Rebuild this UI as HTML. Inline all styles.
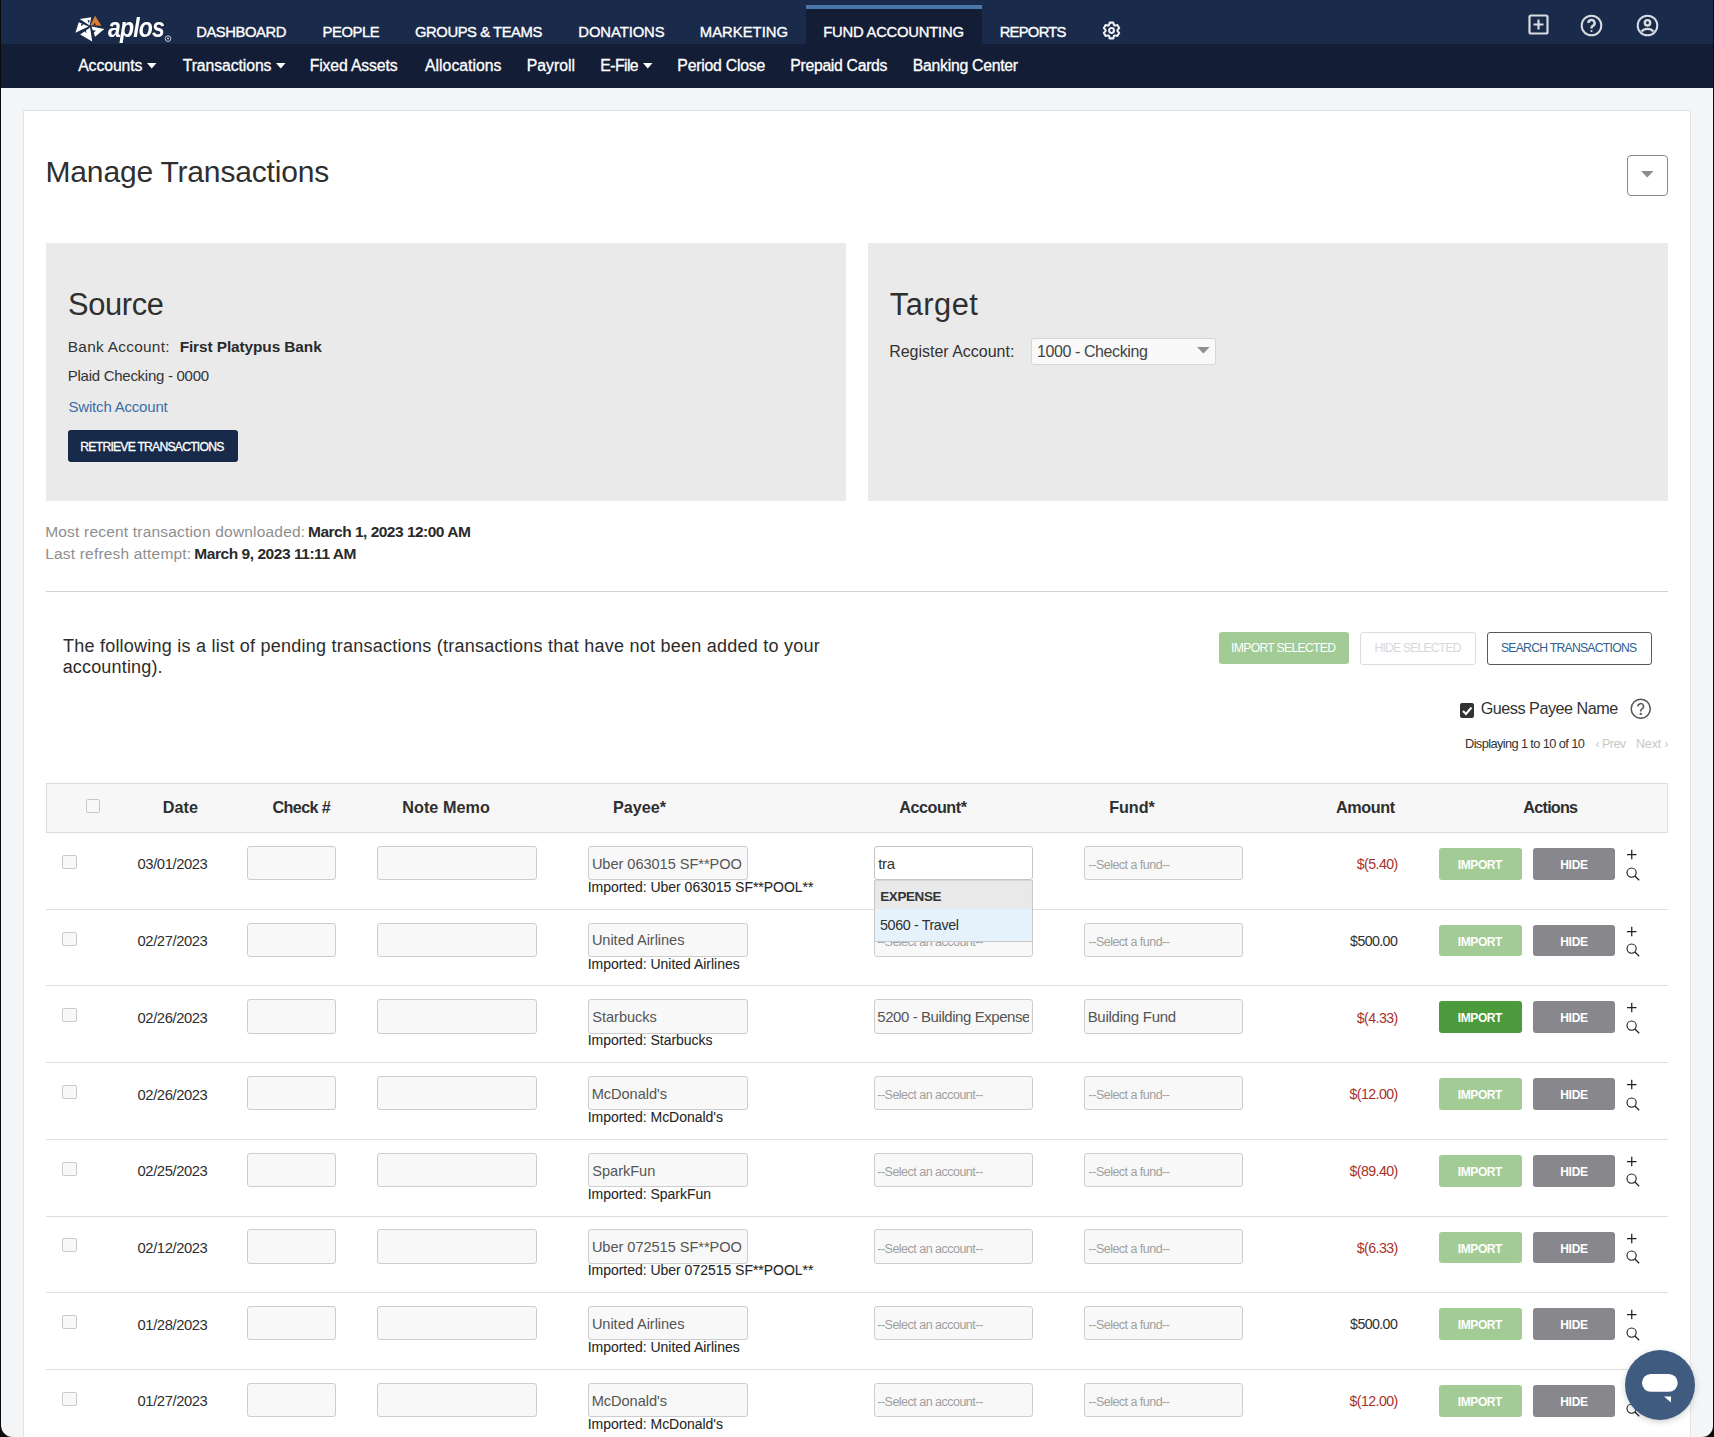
<!DOCTYPE html>
<html><head><meta charset="utf-8">
<style>
html,body{margin:0;padding:0;}
body{width:1714px;height:1437px;overflow:hidden;position:relative;background:#f4f5f7;font-family:"Liberation Sans",sans-serif;}
.t{position:absolute;white-space:pre;line-height:normal;font-family:"Liberation Sans",sans-serif;}
</style></head><body>
<div style="position:absolute;left:0px;top:0px;width:1714px;height:44px;background:#1a2a4a"></div>
<div style="position:absolute;left:0px;top:44px;width:1714px;height:43.5px;background:#131e36"></div>
<div style="position:absolute;left:806px;top:5px;width:176px;height:39px;background:#131e36"></div>
<div style="position:absolute;left:806px;top:5px;width:176px;height:4px;background:#4a77ab"></div>
<div style="position:absolute;left:23px;top:110px;width:1668px;height:1390px;background:#fff;border:1px solid #e3e4e6;box-sizing:border-box"></div>
<svg style="position:absolute;left:70px;top:12px" width="40" height="34" viewBox="0 0 40 34">
<polygon fill="#fff" points="9.7,7.1 21.3,5.2 19.6,13.4"/>
<polygon fill="#fff" points="8.8,10.2 18.6,14.6 5.4,20.8"/>
<polygon fill="#fff" points="10.2,22.6 20.1,15.4 22.2,29.6"/>
<polygon fill="#fff" points="21.5,14.6 34.3,17 25.1,24.8"/>
<polygon fill="#e07b2f" points="25.1,3.8 31.4,13.7 20.3,13.2"/>
<g fill="#1a2a4a">
<polygon points="17.6,8 19.8,8.4 18.6,11.2"/>
<polygon points="11.2,11.4 13.4,12.4 11.1,14.3"/>
<polygon points="13.3,17.6 15.9,18 16.4,21.6"/>
<polygon points="21.4,18.2 26,18.6 23.2,21.2"/>
<polygon points="24.6,10.4 26,13.3 23.4,13.2"/>
</g>
</svg>
<div class="t" style="left:108.2px;top:11.8px;font-size:28px;font-weight:700;font-style:italic;color:#fff;letter-spacing:-1px;transform:scaleX(0.823);transform-origin:0 0">aplos</div>
<svg style="position:absolute;left:164px;top:35px" width="8" height="8" viewBox="0 0 8 8"><circle cx="4" cy="3.6" r="2.8" fill="none" stroke="#c9ced8" stroke-width="1"/><circle cx="4" cy="3.6" r="1" fill="#c9ced8"/></svg>
<div class="t" style="left:196.14px;top:24.00px;font-size:14.8px;color:#fff;letter-spacing:-0.423px;-webkit-text-stroke:0.35px #fff;">DASHBOARD</div>
<div class="t" style="left:322.54px;top:24.00px;font-size:14.8px;color:#fff;letter-spacing:-0.430px;-webkit-text-stroke:0.35px #fff;">PEOPLE</div>
<div class="t" style="left:415.01px;top:24.00px;font-size:14.8px;color:#fff;letter-spacing:-0.431px;-webkit-text-stroke:0.35px #fff;">GROUPS &amp; TEAMS</div>
<div class="t" style="left:578.34px;top:24.00px;font-size:14.8px;color:#fff;letter-spacing:-0.076px;-webkit-text-stroke:0.35px #fff;">DONATIONS</div>
<div class="t" style="left:699.84px;top:24.00px;font-size:14.8px;color:#fff;letter-spacing:0.035px;-webkit-text-stroke:0.35px #fff;">MARKETING</div>
<div class="t" style="left:823.24px;top:24.00px;font-size:14.8px;color:#fff;letter-spacing:-0.224px;-webkit-text-stroke:0.35px #fff;">FUND ACCOUNTING</div>
<div class="t" style="left:999.64px;top:24.00px;font-size:14.8px;color:#fff;letter-spacing:-0.733px;-webkit-text-stroke:0.35px #fff;">REPORTS</div>
<svg style="position:absolute;left:1102px;top:21.2px" width="19" height="19" viewBox="0 0 24 24" fill="none" stroke="#eef0f4" stroke-width="2.6" stroke-linejoin="round">
<circle cx="12" cy="12" r="3.1"/>
<path d="M8.91,5.06 L9.71,2.06 L14.29,2.06 L15.09,5.06 L16.47,5.85 L19.46,5.04 L21.75,9.02 L19.56,11.21 L19.56,12.79 L21.75,14.98 L19.46,18.96 L16.47,18.15 L15.09,18.94 L14.29,21.94 L9.71,21.94 L8.91,18.94 L7.53,18.15 L4.54,18.96 L2.25,14.98 L4.44,12.79 L4.44,11.21 L2.25,9.02 L4.54,5.04 L7.53,5.85Z"/>
</svg>
<svg style="position:absolute;left:1528px;top:14px" width="21" height="21" viewBox="0 0 21 21" fill="none" stroke="#d8dbe0" stroke-width="2.2">
<rect x="1.5" y="1.5" width="18" height="18" rx="1.5"/><path d="M10.5 5.5v10M5.5 10.5h10"/></svg>
<svg style="position:absolute;left:1580px;top:13.5px" width="23" height="23" viewBox="0 0 23 23" fill="none" stroke="#d8dbe0" stroke-width="2">
<circle cx="11.5" cy="11.5" r="9.8"/><path d="M8.4 9a3.1 3.1 0 1 1 4.5 2.8c-.9.5-1.4 1-1.4 2.1v.5" stroke-width="2.5"/><circle cx="11.5" cy="17" r="1.1" fill="#d8dbe0" stroke="none"/></svg>
<svg style="position:absolute;left:1636px;top:13.5px" width="23" height="23" viewBox="0 0 23 23" fill="none" stroke="#d8dbe0" stroke-width="2">
<circle cx="11.5" cy="11.5" r="9.8"/><circle cx="11.5" cy="8.8" r="2.7" stroke-width="2.4"/><path d="M5.6 17.4c1.4-1.7 3.4-2.5 5.9-2.5s4.5.8 5.9 2.5" stroke-width="2.4"/></svg>
<div class="t" style="left:78.20px;top:57.00px;font-size:15.8px;color:#fff;letter-spacing:-0.099px;-webkit-text-stroke:0.3px #fff;">Accounts</div>
<div class="t" style="left:182.75px;top:57.00px;font-size:15.8px;color:#fff;letter-spacing:-0.102px;-webkit-text-stroke:0.3px #fff;">Transactions</div>
<div class="t" style="left:309.77px;top:57.00px;font-size:15.8px;color:#fff;letter-spacing:-0.156px;-webkit-text-stroke:0.3px #fff;">Fixed Assets</div>
<div class="t" style="left:425.00px;top:57.00px;font-size:15.8px;color:#fff;letter-spacing:0.009px;-webkit-text-stroke:0.3px #fff;">Allocations</div>
<div class="t" style="left:526.77px;top:57.00px;font-size:15.8px;color:#fff;-webkit-text-stroke:0.3px #fff;">Payroll</div>
<div class="t" style="left:600.27px;top:57.00px;font-size:15.8px;color:#fff;letter-spacing:-0.577px;-webkit-text-stroke:0.3px #fff;">E-File</div>
<div class="t" style="left:677.37px;top:57.00px;font-size:15.8px;color:#fff;letter-spacing:-0.235px;-webkit-text-stroke:0.3px #fff;">Period Close</div>
<div class="t" style="left:790.27px;top:57.00px;font-size:15.8px;color:#fff;letter-spacing:-0.314px;-webkit-text-stroke:0.3px #fff;">Prepaid Cards</div>
<div class="t" style="left:912.77px;top:57.00px;font-size:15.8px;color:#fff;letter-spacing:-0.277px;-webkit-text-stroke:0.3px #fff;">Banking Center</div>
<svg style="position:absolute;left:147.4px;top:63px" width="10" height="6" viewBox="0 0 10 6"><polygon points="0,0 9.5,0 4.75,5.5" fill="#fff"/></svg>
<svg style="position:absolute;left:276px;top:63px" width="10" height="6" viewBox="0 0 10 6"><polygon points="0,0 9.5,0 4.75,5.5" fill="#fff"/></svg>
<svg style="position:absolute;left:642.6px;top:63px" width="10" height="6" viewBox="0 0 10 6"><polygon points="0,0 9.5,0 4.75,5.5" fill="#fff"/></svg>
<div class="t" style="left:45.56px;top:155.00px;font-size:30px;color:#2f2f2f;letter-spacing:-0.177px;">Manage Transactions</div>
<div style="position:absolute;left:1627px;top:155px;width:40.5px;height:40.5px;border:1px solid #8a8a8a;border-radius:4px;box-sizing:border-box;background:#fff"></div>
<svg style="position:absolute;left:1640.5px;top:171px" width="13" height="8" viewBox="0 0 13 8"><polygon points="0,0 12.5,0 6.25,6.5" fill="#8c8c8c"/></svg>
<div style="position:absolute;left:46px;top:242.5px;width:800px;height:258.2px;background:#eaeaea"></div>
<div style="position:absolute;left:868px;top:242.5px;width:800px;height:258.2px;background:#eaeaea"></div>
<div class="t" style="left:68.04px;top:287.10px;font-size:30.8px;color:#2f2f2f;letter-spacing:-0.356px;">Source</div>
<div class="t" style="left:67.80px;top:337.90px;font-size:15.4px;color:#333;letter-spacing:0.274px;">Bank Account:</div>
<div class="t" style="left:179.64px;top:337.90px;font-size:15.4px;color:#2a2a2a;font-weight:700;letter-spacing:-0.089px;">First Platypus Bank</div>
<div class="t" style="left:67.83px;top:367.00px;font-size:15px;color:#333;letter-spacing:-0.275px;">Plaid Checking - 0000</div>
<div class="t" style="left:68.53px;top:398.00px;font-size:15px;color:#3a6ea5;letter-spacing:-0.195px;">Switch Account</div>
<div style="position:absolute;left:68px;top:430px;width:170px;height:31.7px;background:#172a4a;border-radius:3px"></div>
<div class="t" style="left:80.35px;top:439.70px;font-size:12.2px;color:#fff;letter-spacing:-0.781px;-webkit-text-stroke:0.3px #fff;">RETRIEVE TRANSACTIONS</div>
<div class="t" style="left:889.72px;top:287.30px;font-size:30.8px;color:#2f2f2f;letter-spacing:0.515px;">Target</div>
<div class="t" style="left:889.15px;top:343.20px;font-size:16px;color:#333;letter-spacing:-0.012px;">Register Account:</div>
<div style="position:absolute;left:1030.5px;top:337.8px;width:185.8px;height:27.4px;background:#f9f9f9;border:1px solid #d6d6d6;border-radius:3px;box-sizing:border-box"></div>
<div class="t" style="left:1036.90px;top:343.20px;font-size:16px;color:#444;letter-spacing:-0.401px;">1000 - Checking</div>
<svg style="position:absolute;left:1196.5px;top:347.4px" width="13" height="7" viewBox="0 0 13 7"><polygon points="0,0 12.7,0 6.35,6.6" fill="#8f8f8f"/></svg>
<div class="t" style="left:45.19px;top:522.80px;font-size:15.5px;color:#8e8e8e;letter-spacing:0.194px;">Most recent transaction downloaded:</div>
<div class="t" style="left:308.03px;top:522.80px;font-size:15.5px;color:#2a2a2a;font-weight:700;letter-spacing:-0.508px;">March 1, 2023 12:00 AM</div>
<div class="t" style="left:45.19px;top:545.40px;font-size:15.5px;color:#8e8e8e;letter-spacing:0.188px;">Last refresh attempt:</div>
<div class="t" style="left:194.33px;top:545.40px;font-size:15.5px;color:#2a2a2a;font-weight:700;letter-spacing:-0.455px;">March 9, 2023 11:11 AM</div>
<div style="position:absolute;left:46px;top:591px;width:1622px;height:1px;background:#d2d2d2"></div>
<div class="t" style="left:62.92px;top:635.60px;font-size:18px;color:#2c2c2c;letter-spacing:0.241px;">The following is a list of pending transactions (transactions that have not been added to your</div>
<div class="t" style="left:62.64px;top:657.00px;font-size:18px;color:#2c2c2c;letter-spacing:0.175px;">accounting).</div>
<div style="position:absolute;left:1219px;top:632.3px;width:129.8px;height:31.5px;background:#a3cb96;border-radius:3px"></div>
<div class="t" style="left:1231.05px;top:641.10px;font-size:12.2px;color:#fff;letter-spacing:-0.689px;">IMPORT SELECTED</div>
<div style="position:absolute;left:1360px;top:631.5px;width:115.7px;height:33.1px;background:#fff;border:1px solid #dcdcdc;border-radius:3px;box-sizing:border-box"></div>
<div class="t" style="left:1374.45px;top:641.10px;font-size:12.2px;color:#d8d8d8;letter-spacing:-0.814px;">HIDE SELECTED</div>
<div style="position:absolute;left:1487.3px;top:631.5px;width:164.3px;height:33.1px;background:#fff;border:1px solid #5a5a5a;border-radius:3px;box-sizing:border-box"></div>
<div class="t" style="left:1500.92px;top:641.10px;font-size:12.2px;color:#2f5f92;letter-spacing:-0.734px;">SEARCH TRANSACTIONS</div>
<div style="position:absolute;left:1459.6px;top:703px;width:14.4px;height:15.3px;background:#333;border-radius:2px"></div>
<svg style="position:absolute;left:1459.6px;top:703px" width="14.4" height="15.3" viewBox="0 0 14.4 15.3"><path d="M3 8l3 3 5.5-6.5" fill="none" stroke="#fff" stroke-width="2"/></svg>
<div class="t" style="left:1480.74px;top:699.20px;font-size:16.2px;color:#333;letter-spacing:-0.490px;">Guess Payee Name</div>
<svg style="position:absolute;left:1629.5px;top:697.8px" width="21.5" height="21.5" viewBox="0 0 23 23" fill="none" stroke="#555" stroke-width="1.6">
<circle cx="11.5" cy="11.5" r="10.2"/><path d="M8.5 9a3 3 0 1 1 4.3 2.7c-.9.5-1.3 1-1.3 2v.8"/><circle cx="11.5" cy="17" r="0.5" fill="#555"/></svg>
<div class="t" style="left:1465.00px;top:735.50px;font-size:12.8px;color:#333;letter-spacing:-0.607px;">Displaying 1 to 10 of 10</div>
<div class="t" style="left:1595.61px;top:736.50px;font-size:12.5px;color:#c8c8c8;letter-spacing:-0.589px;">‹ Prev</div>
<div class="t" style="left:1636.02px;top:736.50px;font-size:12.5px;color:#c8c8c8;letter-spacing:-0.182px;">Next ›</div>
<div style="position:absolute;left:46px;top:782.5px;width:1622px;height:50.3px;background:#f7f7f7;border:1px solid #dcdcdc;box-sizing:border-box"></div>
<div style="position:absolute;left:86.2px;top:799.4px;width:13.6px;height:13.6px;background:#f8f8f8;border:1px solid #c8c8c8;border-radius:2px;box-sizing:border-box"></div>
<div class="t" style="left:162.79px;top:798.30px;font-size:16.2px;color:#2f2f2f;font-weight:700;letter-spacing:0.068px;">Date</div>
<div class="t" style="left:272.49px;top:798.30px;font-size:16.2px;color:#2f2f2f;font-weight:700;letter-spacing:-0.630px;">Check #</div>
<div class="t" style="left:402.19px;top:798.30px;font-size:16.2px;color:#2f2f2f;font-weight:700;letter-spacing:0.067px;">Note Memo</div>
<div class="t" style="left:612.99px;top:798.30px;font-size:16.2px;color:#2f2f2f;font-weight:700;letter-spacing:-0.032px;">Payee*</div>
<div class="t" style="left:899.15px;top:798.30px;font-size:16.2px;color:#2f2f2f;font-weight:700;letter-spacing:-0.454px;">Account*</div>
<div class="t" style="left:1109.19px;top:798.30px;font-size:16.2px;color:#2f2f2f;font-weight:700;letter-spacing:-0.075px;">Fund*</div>
<div class="t" style="left:1336.05px;top:798.30px;font-size:16.2px;color:#2f2f2f;font-weight:700;letter-spacing:-0.391px;">Amount</div>
<div class="t" style="left:1523.35px;top:798.30px;font-size:16.2px;color:#2f2f2f;font-weight:700;letter-spacing:-0.766px;">Actions</div>
<div style="position:absolute;left:62.4px;top:854.8px;width:14.4px;height:14.2px;background:#f8f8f8;border:1px solid #cacaca;border-radius:2px;box-sizing:border-box"></div>
<div class="t" style="left:137.54px;top:856.40px;font-size:14.8px;color:#2f2f2f;letter-spacing:-0.423px;">03/01/2023</div>
<div style="position:absolute;left:247.2px;top:845.9px;width:88.4px;height:34.4px;background:#f8f8f8;border:1px solid #cdcdcd;border-radius:3px;box-sizing:border-box"></div>
<div style="position:absolute;left:377.4px;top:845.9px;width:159.2px;height:34.4px;background:#f8f8f8;border:1px solid #cdcdcd;border-radius:3px;box-sizing:border-box"></div>
<div style="position:absolute;left:588.3px;top:845.9px;width:159.3px;height:34.4px;background:#f8f8f8;border:1px solid #cdcdcd;border-radius:3px;box-sizing:border-box"></div>
<div class="t" style="left:591.89px;top:855.70px;font-size:14.6px;color:#555;letter-spacing:-0.050px;">Uber 063015 SF**POO</div>
<div class="t" style="left:587.66px;top:878.80px;font-size:14px;color:#262626;letter-spacing:-0.020px;-webkit-text-stroke:0.08px #2a2a2a;">Imported: Uber 063015 SF**POOL**</div>
<div style="position:absolute;left:874.1px;top:845.9px;width:158.6px;height:34.4px;background:#fff;border:1px solid #c4c4c4;border-radius:3px;box-sizing:border-box"></div>
<div class="t" style="left:878.20px;top:855.10px;font-size:15px;color:#333;letter-spacing:-0.250px;">tra</div>
<div style="position:absolute;left:1084.3px;top:845.9px;width:159.1px;height:34.4px;background:#f8f8f8;border:1px solid #cdcdcd;border-radius:3px;box-sizing:border-box"></div>
<div class="t" style="left:1088.61px;top:858.10px;font-size:12.5px;color:#a0a0a0;letter-spacing:-0.523px;">--Select a fund--</div>
<div class="t" style="left:1356.84px;top:856.20px;font-size:14.2px;color:#a8322a;letter-spacing:-0.600px;">$(5.40)</div>
<div style="position:absolute;left:1439px;top:848.0px;width:83px;height:31.8px;background:#a2cb96;border-radius:3px"></div>
<div class="t" style="left:1457.85px;top:858.00px;font-size:12px;color:#fff;font-weight:700;letter-spacing:-0.419px;">IMPORT</div>
<div style="position:absolute;left:1533.2px;top:848.0px;width:81.6px;height:31.8px;background:#88888c;border-radius:3px"></div>
<div class="t" style="left:1560.15px;top:858.00px;font-size:12px;color:#fff;font-weight:700;letter-spacing:-0.235px;">HIDE</div>
<svg style="position:absolute;left:1625.5px;top:849.0px" width="12" height="12" viewBox="0 0 12 12"><path d="M5.75 0.8v9.4M1 5.5h9.5" stroke="#222" stroke-width="1.25" fill="none"/></svg>
<svg style="position:absolute;left:1625.5px;top:866.5px" width="15" height="14" viewBox="0 0 15 14"><circle cx="5.6" cy="5.6" r="4.6" stroke="#222" stroke-width="1.15" fill="none"/><path d="M8.9 9l4.3 4.2" stroke="#222" stroke-width="1.3"/></svg>
<div style="position:absolute;left:46px;top:908.7px;width:1622px;height:1.0px;background:#dedede"></div>
<div style="position:absolute;left:62.4px;top:931.5px;width:14.4px;height:14.2px;background:#f8f8f8;border:1px solid #cacaca;border-radius:2px;box-sizing:border-box"></div>
<div class="t" style="left:137.54px;top:933.10px;font-size:14.8px;color:#2f2f2f;letter-spacing:-0.423px;">02/27/2023</div>
<div style="position:absolute;left:247.2px;top:922.6px;width:88.4px;height:34.4px;background:#f8f8f8;border:1px solid #cdcdcd;border-radius:3px;box-sizing:border-box"></div>
<div style="position:absolute;left:377.4px;top:922.6px;width:159.2px;height:34.4px;background:#f8f8f8;border:1px solid #cdcdcd;border-radius:3px;box-sizing:border-box"></div>
<div style="position:absolute;left:588.3px;top:922.6px;width:159.3px;height:34.4px;background:#f8f8f8;border:1px solid #cdcdcd;border-radius:3px;box-sizing:border-box"></div>
<div class="t" style="left:591.89px;top:932.40px;font-size:14.6px;color:#555;letter-spacing:-0.050px;">United Airlines</div>
<div class="t" style="left:587.66px;top:955.50px;font-size:14px;color:#262626;letter-spacing:-0.020px;-webkit-text-stroke:0.08px #2a2a2a;">Imported: United Airlines</div>
<div style="position:absolute;left:874.1px;top:922.6px;width:158.6px;height:34.4px;background:#f8f8f8;border:1px solid #cdcdcd;border-radius:3px;box-sizing:border-box"></div>
<div class="t" style="left:877.31px;top:934.90px;font-size:12.5px;color:#a0a0a0;letter-spacing:-0.514px;">--Select an account--</div>
<div style="position:absolute;left:1084.3px;top:922.6px;width:159.1px;height:34.4px;background:#f8f8f8;border:1px solid #cdcdcd;border-radius:3px;box-sizing:border-box"></div>
<div class="t" style="left:1088.61px;top:934.80px;font-size:12.5px;color:#a0a0a0;letter-spacing:-0.523px;">--Select a fund--</div>
<div class="t" style="left:1350.12px;top:932.90px;font-size:14.2px;color:#2f2f2f;letter-spacing:-0.600px;">$500.00</div>
<div style="position:absolute;left:1439px;top:924.7px;width:83px;height:31.8px;background:#a2cb96;border-radius:3px"></div>
<div class="t" style="left:1457.85px;top:934.70px;font-size:12px;color:#fff;font-weight:700;letter-spacing:-0.419px;">IMPORT</div>
<div style="position:absolute;left:1533.2px;top:924.7px;width:81.6px;height:31.8px;background:#88888c;border-radius:3px"></div>
<div class="t" style="left:1560.15px;top:934.70px;font-size:12px;color:#fff;font-weight:700;letter-spacing:-0.235px;">HIDE</div>
<svg style="position:absolute;left:1625.5px;top:925.7px" width="12" height="12" viewBox="0 0 12 12"><path d="M5.75 0.8v9.4M1 5.5h9.5" stroke="#222" stroke-width="1.25" fill="none"/></svg>
<svg style="position:absolute;left:1625.5px;top:943.2px" width="15" height="14" viewBox="0 0 15 14"><circle cx="5.6" cy="5.6" r="4.6" stroke="#222" stroke-width="1.15" fill="none"/><path d="M8.9 9l4.3 4.2" stroke="#222" stroke-width="1.3"/></svg>
<div style="position:absolute;left:46px;top:985.4px;width:1622px;height:1.0px;background:#dedede"></div>
<div style="position:absolute;left:62.4px;top:1008.1999999999999px;width:14.4px;height:14.2px;background:#f8f8f8;border:1px solid #cacaca;border-radius:2px;box-sizing:border-box"></div>
<div class="t" style="left:137.54px;top:1009.80px;font-size:14.8px;color:#2f2f2f;letter-spacing:-0.423px;">02/26/2023</div>
<div style="position:absolute;left:247.2px;top:999.3px;width:88.4px;height:34.4px;background:#f8f8f8;border:1px solid #cdcdcd;border-radius:3px;box-sizing:border-box"></div>
<div style="position:absolute;left:377.4px;top:999.3px;width:159.2px;height:34.4px;background:#f8f8f8;border:1px solid #cdcdcd;border-radius:3px;box-sizing:border-box"></div>
<div style="position:absolute;left:588.3px;top:999.3px;width:159.3px;height:34.4px;background:#f8f8f8;border:1px solid #cdcdcd;border-radius:3px;box-sizing:border-box"></div>
<div class="t" style="left:592.34px;top:1009.10px;font-size:14.6px;color:#555;letter-spacing:-0.050px;">Starbucks</div>
<div class="t" style="left:587.66px;top:1032.20px;font-size:14px;color:#262626;letter-spacing:-0.020px;-webkit-text-stroke:0.08px #2a2a2a;">Imported: Starbucks</div>
<div style="position:absolute;left:874.1px;top:999.3px;width:158.6px;height:34.4px;background:#f8f8f8;border:1px solid #cdcdcd;border-radius:3px;box-sizing:border-box"></div>
<div style="position:absolute;left:875px;top:1000.3px;width:153.5px;height:32px;overflow:hidden"><div class="t" style="left:2.3px;top:8.2px;font-size:15px;color:#555;letter-spacing:-0.43px">5200 - Building Expense</div></div>
<div style="position:absolute;left:1084.3px;top:999.3px;width:159.1px;height:34.4px;background:#f8f8f8;border:1px solid #cdcdcd;border-radius:3px;box-sizing:border-box"></div>
<div class="t" style="left:1087.63px;top:1008.40px;font-size:15px;color:#555;letter-spacing:-0.268px;">Building Fund</div>
<div class="t" style="left:1356.84px;top:1009.60px;font-size:14.2px;color:#a8322a;letter-spacing:-0.600px;">$(4.33)</div>
<div style="position:absolute;left:1439px;top:1001.4px;width:83px;height:31.8px;background:#4b9a3b;border-radius:3px"></div>
<div class="t" style="left:1457.85px;top:1011.40px;font-size:12px;color:#fff;font-weight:700;letter-spacing:-0.419px;">IMPORT</div>
<div style="position:absolute;left:1533.2px;top:1001.4px;width:81.6px;height:31.8px;background:#88888c;border-radius:3px"></div>
<div class="t" style="left:1560.15px;top:1011.40px;font-size:12px;color:#fff;font-weight:700;letter-spacing:-0.235px;">HIDE</div>
<svg style="position:absolute;left:1625.5px;top:1002.4px" width="12" height="12" viewBox="0 0 12 12"><path d="M5.75 0.8v9.4M1 5.5h9.5" stroke="#222" stroke-width="1.25" fill="none"/></svg>
<svg style="position:absolute;left:1625.5px;top:1019.9px" width="15" height="14" viewBox="0 0 15 14"><circle cx="5.6" cy="5.6" r="4.6" stroke="#222" stroke-width="1.15" fill="none"/><path d="M8.9 9l4.3 4.2" stroke="#222" stroke-width="1.3"/></svg>
<div style="position:absolute;left:46px;top:1062.1px;width:1622px;height:1.0px;background:#dedede"></div>
<div style="position:absolute;left:62.4px;top:1084.8999999999999px;width:14.4px;height:14.2px;background:#f8f8f8;border:1px solid #cacaca;border-radius:2px;box-sizing:border-box"></div>
<div class="t" style="left:137.54px;top:1086.50px;font-size:14.8px;color:#2f2f2f;letter-spacing:-0.423px;">02/26/2023</div>
<div style="position:absolute;left:247.2px;top:1076.0px;width:88.4px;height:34.4px;background:#f8f8f8;border:1px solid #cdcdcd;border-radius:3px;box-sizing:border-box"></div>
<div style="position:absolute;left:377.4px;top:1076.0px;width:159.2px;height:34.4px;background:#f8f8f8;border:1px solid #cdcdcd;border-radius:3px;box-sizing:border-box"></div>
<div style="position:absolute;left:588.3px;top:1076.0px;width:159.3px;height:34.4px;background:#f8f8f8;border:1px solid #cdcdcd;border-radius:3px;box-sizing:border-box"></div>
<div class="t" style="left:591.66px;top:1085.80px;font-size:14.6px;color:#555;letter-spacing:-0.050px;">McDonald&#x27;s</div>
<div class="t" style="left:587.66px;top:1108.90px;font-size:14px;color:#262626;letter-spacing:-0.020px;-webkit-text-stroke:0.08px #2a2a2a;">Imported: McDonald&#x27;s</div>
<div style="position:absolute;left:874.1px;top:1076.0px;width:158.6px;height:34.4px;background:#f8f8f8;border:1px solid #cdcdcd;border-radius:3px;box-sizing:border-box"></div>
<div class="t" style="left:877.31px;top:1088.30px;font-size:12.5px;color:#a0a0a0;letter-spacing:-0.514px;">--Select an account--</div>
<div style="position:absolute;left:1084.3px;top:1076.0px;width:159.1px;height:34.4px;background:#f8f8f8;border:1px solid #cdcdcd;border-radius:3px;box-sizing:border-box"></div>
<div class="t" style="left:1088.61px;top:1088.20px;font-size:12.5px;color:#a0a0a0;letter-spacing:-0.523px;">--Select a fund--</div>
<div class="t" style="left:1349.55px;top:1086.30px;font-size:14.2px;color:#a8322a;letter-spacing:-0.600px;">$(12.00)</div>
<div style="position:absolute;left:1439px;top:1078.1px;width:83px;height:31.8px;background:#a2cb96;border-radius:3px"></div>
<div class="t" style="left:1457.85px;top:1088.10px;font-size:12px;color:#fff;font-weight:700;letter-spacing:-0.419px;">IMPORT</div>
<div style="position:absolute;left:1533.2px;top:1078.1px;width:81.6px;height:31.8px;background:#88888c;border-radius:3px"></div>
<div class="t" style="left:1560.15px;top:1088.10px;font-size:12px;color:#fff;font-weight:700;letter-spacing:-0.235px;">HIDE</div>
<svg style="position:absolute;left:1625.5px;top:1079.1px" width="12" height="12" viewBox="0 0 12 12"><path d="M5.75 0.8v9.4M1 5.5h9.5" stroke="#222" stroke-width="1.25" fill="none"/></svg>
<svg style="position:absolute;left:1625.5px;top:1096.6px" width="15" height="14" viewBox="0 0 15 14"><circle cx="5.6" cy="5.6" r="4.6" stroke="#222" stroke-width="1.15" fill="none"/><path d="M8.9 9l4.3 4.2" stroke="#222" stroke-width="1.3"/></svg>
<div style="position:absolute;left:46px;top:1138.8px;width:1622px;height:1.0px;background:#dedede"></div>
<div style="position:absolute;left:62.4px;top:1161.6px;width:14.4px;height:14.2px;background:#f8f8f8;border:1px solid #cacaca;border-radius:2px;box-sizing:border-box"></div>
<div class="t" style="left:137.54px;top:1163.20px;font-size:14.8px;color:#2f2f2f;letter-spacing:-0.423px;">02/25/2023</div>
<div style="position:absolute;left:247.2px;top:1152.7px;width:88.4px;height:34.4px;background:#f8f8f8;border:1px solid #cdcdcd;border-radius:3px;box-sizing:border-box"></div>
<div style="position:absolute;left:377.4px;top:1152.7px;width:159.2px;height:34.4px;background:#f8f8f8;border:1px solid #cdcdcd;border-radius:3px;box-sizing:border-box"></div>
<div style="position:absolute;left:588.3px;top:1152.7px;width:159.3px;height:34.4px;background:#f8f8f8;border:1px solid #cdcdcd;border-radius:3px;box-sizing:border-box"></div>
<div class="t" style="left:592.34px;top:1162.50px;font-size:14.6px;color:#555;letter-spacing:-0.050px;">SparkFun</div>
<div class="t" style="left:587.66px;top:1185.60px;font-size:14px;color:#262626;letter-spacing:-0.020px;-webkit-text-stroke:0.08px #2a2a2a;">Imported: SparkFun</div>
<div style="position:absolute;left:874.1px;top:1152.7px;width:158.6px;height:34.4px;background:#f8f8f8;border:1px solid #cdcdcd;border-radius:3px;box-sizing:border-box"></div>
<div class="t" style="left:877.31px;top:1165.00px;font-size:12.5px;color:#a0a0a0;letter-spacing:-0.514px;">--Select an account--</div>
<div style="position:absolute;left:1084.3px;top:1152.7px;width:159.1px;height:34.4px;background:#f8f8f8;border:1px solid #cdcdcd;border-radius:3px;box-sizing:border-box"></div>
<div class="t" style="left:1088.61px;top:1164.90px;font-size:12.5px;color:#a0a0a0;letter-spacing:-0.523px;">--Select a fund--</div>
<div class="t" style="left:1349.55px;top:1163.00px;font-size:14.2px;color:#a8322a;letter-spacing:-0.600px;">$(89.40)</div>
<div style="position:absolute;left:1439px;top:1154.8px;width:83px;height:31.8px;background:#a2cb96;border-radius:3px"></div>
<div class="t" style="left:1457.85px;top:1164.80px;font-size:12px;color:#fff;font-weight:700;letter-spacing:-0.419px;">IMPORT</div>
<div style="position:absolute;left:1533.2px;top:1154.8px;width:81.6px;height:31.8px;background:#88888c;border-radius:3px"></div>
<div class="t" style="left:1560.15px;top:1164.80px;font-size:12px;color:#fff;font-weight:700;letter-spacing:-0.235px;">HIDE</div>
<svg style="position:absolute;left:1625.5px;top:1155.8px" width="12" height="12" viewBox="0 0 12 12"><path d="M5.75 0.8v9.4M1 5.5h9.5" stroke="#222" stroke-width="1.25" fill="none"/></svg>
<svg style="position:absolute;left:1625.5px;top:1173.3px" width="15" height="14" viewBox="0 0 15 14"><circle cx="5.6" cy="5.6" r="4.6" stroke="#222" stroke-width="1.15" fill="none"/><path d="M8.9 9l4.3 4.2" stroke="#222" stroke-width="1.3"/></svg>
<div style="position:absolute;left:46px;top:1215.5px;width:1622px;height:1.0px;background:#dedede"></div>
<div style="position:absolute;left:62.4px;top:1238.3px;width:14.4px;height:14.2px;background:#f8f8f8;border:1px solid #cacaca;border-radius:2px;box-sizing:border-box"></div>
<div class="t" style="left:137.54px;top:1239.90px;font-size:14.8px;color:#2f2f2f;letter-spacing:-0.423px;">02/12/2023</div>
<div style="position:absolute;left:247.2px;top:1229.4px;width:88.4px;height:34.4px;background:#f8f8f8;border:1px solid #cdcdcd;border-radius:3px;box-sizing:border-box"></div>
<div style="position:absolute;left:377.4px;top:1229.4px;width:159.2px;height:34.4px;background:#f8f8f8;border:1px solid #cdcdcd;border-radius:3px;box-sizing:border-box"></div>
<div style="position:absolute;left:588.3px;top:1229.4px;width:159.3px;height:34.4px;background:#f8f8f8;border:1px solid #cdcdcd;border-radius:3px;box-sizing:border-box"></div>
<div class="t" style="left:591.89px;top:1239.20px;font-size:14.6px;color:#555;letter-spacing:-0.050px;">Uber 072515 SF**POO</div>
<div class="t" style="left:587.66px;top:1262.30px;font-size:14px;color:#262626;letter-spacing:-0.020px;-webkit-text-stroke:0.08px #2a2a2a;">Imported: Uber 072515 SF**POOL**</div>
<div style="position:absolute;left:874.1px;top:1229.4px;width:158.6px;height:34.4px;background:#f8f8f8;border:1px solid #cdcdcd;border-radius:3px;box-sizing:border-box"></div>
<div class="t" style="left:877.31px;top:1241.70px;font-size:12.5px;color:#a0a0a0;letter-spacing:-0.514px;">--Select an account--</div>
<div style="position:absolute;left:1084.3px;top:1229.4px;width:159.1px;height:34.4px;background:#f8f8f8;border:1px solid #cdcdcd;border-radius:3px;box-sizing:border-box"></div>
<div class="t" style="left:1088.61px;top:1241.60px;font-size:12.5px;color:#a0a0a0;letter-spacing:-0.523px;">--Select a fund--</div>
<div class="t" style="left:1356.84px;top:1239.70px;font-size:14.2px;color:#a8322a;letter-spacing:-0.600px;">$(6.33)</div>
<div style="position:absolute;left:1439px;top:1231.5px;width:83px;height:31.8px;background:#a2cb96;border-radius:3px"></div>
<div class="t" style="left:1457.85px;top:1241.50px;font-size:12px;color:#fff;font-weight:700;letter-spacing:-0.419px;">IMPORT</div>
<div style="position:absolute;left:1533.2px;top:1231.5px;width:81.6px;height:31.8px;background:#88888c;border-radius:3px"></div>
<div class="t" style="left:1560.15px;top:1241.50px;font-size:12px;color:#fff;font-weight:700;letter-spacing:-0.235px;">HIDE</div>
<svg style="position:absolute;left:1625.5px;top:1232.5px" width="12" height="12" viewBox="0 0 12 12"><path d="M5.75 0.8v9.4M1 5.5h9.5" stroke="#222" stroke-width="1.25" fill="none"/></svg>
<svg style="position:absolute;left:1625.5px;top:1250.0px" width="15" height="14" viewBox="0 0 15 14"><circle cx="5.6" cy="5.6" r="4.6" stroke="#222" stroke-width="1.15" fill="none"/><path d="M8.9 9l4.3 4.2" stroke="#222" stroke-width="1.3"/></svg>
<div style="position:absolute;left:46px;top:1292.2px;width:1622px;height:1.0px;background:#dedede"></div>
<div style="position:absolute;left:62.4px;top:1315.0px;width:14.4px;height:14.2px;background:#f8f8f8;border:1px solid #cacaca;border-radius:2px;box-sizing:border-box"></div>
<div class="t" style="left:137.54px;top:1316.60px;font-size:14.8px;color:#2f2f2f;letter-spacing:-0.423px;">01/28/2023</div>
<div style="position:absolute;left:247.2px;top:1306.1000000000001px;width:88.4px;height:34.4px;background:#f8f8f8;border:1px solid #cdcdcd;border-radius:3px;box-sizing:border-box"></div>
<div style="position:absolute;left:377.4px;top:1306.1000000000001px;width:159.2px;height:34.4px;background:#f8f8f8;border:1px solid #cdcdcd;border-radius:3px;box-sizing:border-box"></div>
<div style="position:absolute;left:588.3px;top:1306.1000000000001px;width:159.3px;height:34.4px;background:#f8f8f8;border:1px solid #cdcdcd;border-radius:3px;box-sizing:border-box"></div>
<div class="t" style="left:591.89px;top:1315.90px;font-size:14.6px;color:#555;letter-spacing:-0.050px;">United Airlines</div>
<div class="t" style="left:587.66px;top:1339.00px;font-size:14px;color:#262626;letter-spacing:-0.020px;-webkit-text-stroke:0.08px #2a2a2a;">Imported: United Airlines</div>
<div style="position:absolute;left:874.1px;top:1306.1000000000001px;width:158.6px;height:34.4px;background:#f8f8f8;border:1px solid #cdcdcd;border-radius:3px;box-sizing:border-box"></div>
<div class="t" style="left:877.31px;top:1318.40px;font-size:12.5px;color:#a0a0a0;letter-spacing:-0.514px;">--Select an account--</div>
<div style="position:absolute;left:1084.3px;top:1306.1000000000001px;width:159.1px;height:34.4px;background:#f8f8f8;border:1px solid #cdcdcd;border-radius:3px;box-sizing:border-box"></div>
<div class="t" style="left:1088.61px;top:1318.30px;font-size:12.5px;color:#a0a0a0;letter-spacing:-0.523px;">--Select a fund--</div>
<div class="t" style="left:1350.12px;top:1316.40px;font-size:14.2px;color:#2f2f2f;letter-spacing:-0.600px;">$500.00</div>
<div style="position:absolute;left:1439px;top:1308.2px;width:83px;height:31.8px;background:#a2cb96;border-radius:3px"></div>
<div class="t" style="left:1457.85px;top:1318.20px;font-size:12px;color:#fff;font-weight:700;letter-spacing:-0.419px;">IMPORT</div>
<div style="position:absolute;left:1533.2px;top:1308.2px;width:81.6px;height:31.8px;background:#88888c;border-radius:3px"></div>
<div class="t" style="left:1560.15px;top:1318.20px;font-size:12px;color:#fff;font-weight:700;letter-spacing:-0.235px;">HIDE</div>
<svg style="position:absolute;left:1625.5px;top:1309.2px" width="12" height="12" viewBox="0 0 12 12"><path d="M5.75 0.8v9.4M1 5.5h9.5" stroke="#222" stroke-width="1.25" fill="none"/></svg>
<svg style="position:absolute;left:1625.5px;top:1326.7px" width="15" height="14" viewBox="0 0 15 14"><circle cx="5.6" cy="5.6" r="4.6" stroke="#222" stroke-width="1.15" fill="none"/><path d="M8.9 9l4.3 4.2" stroke="#222" stroke-width="1.3"/></svg>
<div style="position:absolute;left:46px;top:1368.9px;width:1622px;height:1.0px;background:#dedede"></div>
<div style="position:absolute;left:62.4px;top:1391.7px;width:14.4px;height:14.2px;background:#f8f8f8;border:1px solid #cacaca;border-radius:2px;box-sizing:border-box"></div>
<div class="t" style="left:137.54px;top:1393.30px;font-size:14.8px;color:#2f2f2f;letter-spacing:-0.423px;">01/27/2023</div>
<div style="position:absolute;left:247.2px;top:1382.8000000000002px;width:88.4px;height:34.4px;background:#f8f8f8;border:1px solid #cdcdcd;border-radius:3px;box-sizing:border-box"></div>
<div style="position:absolute;left:377.4px;top:1382.8000000000002px;width:159.2px;height:34.4px;background:#f8f8f8;border:1px solid #cdcdcd;border-radius:3px;box-sizing:border-box"></div>
<div style="position:absolute;left:588.3px;top:1382.8000000000002px;width:159.3px;height:34.4px;background:#f8f8f8;border:1px solid #cdcdcd;border-radius:3px;box-sizing:border-box"></div>
<div class="t" style="left:591.66px;top:1392.60px;font-size:14.6px;color:#555;letter-spacing:-0.050px;">McDonald&#x27;s</div>
<div class="t" style="left:587.66px;top:1415.70px;font-size:14px;color:#262626;letter-spacing:-0.020px;-webkit-text-stroke:0.08px #2a2a2a;">Imported: McDonald&#x27;s</div>
<div style="position:absolute;left:874.1px;top:1382.8000000000002px;width:158.6px;height:34.4px;background:#f8f8f8;border:1px solid #cdcdcd;border-radius:3px;box-sizing:border-box"></div>
<div class="t" style="left:877.31px;top:1395.10px;font-size:12.5px;color:#a0a0a0;letter-spacing:-0.514px;">--Select an account--</div>
<div style="position:absolute;left:1084.3px;top:1382.8000000000002px;width:159.1px;height:34.4px;background:#f8f8f8;border:1px solid #cdcdcd;border-radius:3px;box-sizing:border-box"></div>
<div class="t" style="left:1088.61px;top:1395.00px;font-size:12.5px;color:#a0a0a0;letter-spacing:-0.523px;">--Select a fund--</div>
<div class="t" style="left:1349.55px;top:1393.10px;font-size:14.2px;color:#a8322a;letter-spacing:-0.600px;">$(12.00)</div>
<div style="position:absolute;left:1439px;top:1384.9px;width:83px;height:31.8px;background:#a2cb96;border-radius:3px"></div>
<div class="t" style="left:1457.85px;top:1394.90px;font-size:12px;color:#fff;font-weight:700;letter-spacing:-0.419px;">IMPORT</div>
<div style="position:absolute;left:1533.2px;top:1384.9px;width:81.6px;height:31.8px;background:#88888c;border-radius:3px"></div>
<div class="t" style="left:1560.15px;top:1394.90px;font-size:12px;color:#fff;font-weight:700;letter-spacing:-0.235px;">HIDE</div>
<svg style="position:absolute;left:1625.5px;top:1385.9px" width="12" height="12" viewBox="0 0 12 12"><path d="M5.75 0.8v9.4M1 5.5h9.5" stroke="#222" stroke-width="1.25" fill="none"/></svg>
<svg style="position:absolute;left:1625.5px;top:1403.4px" width="15" height="14" viewBox="0 0 15 14"><circle cx="5.6" cy="5.6" r="4.6" stroke="#222" stroke-width="1.15" fill="none"/><path d="M8.9 9l4.3 4.2" stroke="#222" stroke-width="1.3"/></svg>
<div style="position:absolute;left:874.1px;top:879.8px;width:158.6px;height:62.4px;background:#e5f2fb;border:1px solid #c8c8c8;border-top:none;box-sizing:border-box"></div>
<div style="position:absolute;left:874.6px;top:879.8px;width:157.6px;height:28.9px;background:#e9e9e9;box-shadow:inset 0 1px 1px rgba(0,0,0,0.08)"></div>
<div class="t" style="left:880.16px;top:889.00px;font-size:13.4px;color:#333;font-weight:700;letter-spacing:-0.319px;">EXPENSE</div>
<div class="t" style="left:880.05px;top:916.90px;font-size:14.3px;color:#2f2f2f;letter-spacing:-0.377px;">5060 - Travel</div>
<svg style="position:absolute;left:1615px;top:1340px" width="90" height="90" viewBox="0 0 90 90">
<defs><filter id="sh" x="-30%" y="-30%" width="160%" height="160%"><feGaussianBlur stdDeviation="3"/></filter></defs>
<circle cx="45" cy="47" r="35" fill="rgba(0,0,0,0.18)" filter="url(#sh)"/>
<circle cx="45" cy="45" r="35" fill="#3f5b80"/>
<rect x="27" y="34" width="35.7" height="17.8" rx="8.9" fill="#fff"/>
<polygon points="49,56.5 56,56.5 56,62.5" fill="#fff"/>
</svg>
<div style="position:absolute;left:0px;top:0px;width:1px;height:1437px;background:#0b0b0b"></div>
<div style="position:absolute;left:1713px;top:0px;width:1px;height:1437px;background:#0b0b0b"></div>
<svg style="position:absolute;left:0;top:1425px" width="13" height="12" viewBox="0 0 13 12"><path d="M0,0 L1,0 A11.5,12 0 0 0 12.5,12 L0,12 Z" fill="#0b0b0b"/></svg>
<svg style="position:absolute;left:1701px;top:1426px" width="13" height="11" viewBox="0 0 13 11"><path d="M13,0 L12,0 A11,11 0 0 1 1,11 L13,11 Z" fill="#0b0b0b"/></svg>

</body></html>
